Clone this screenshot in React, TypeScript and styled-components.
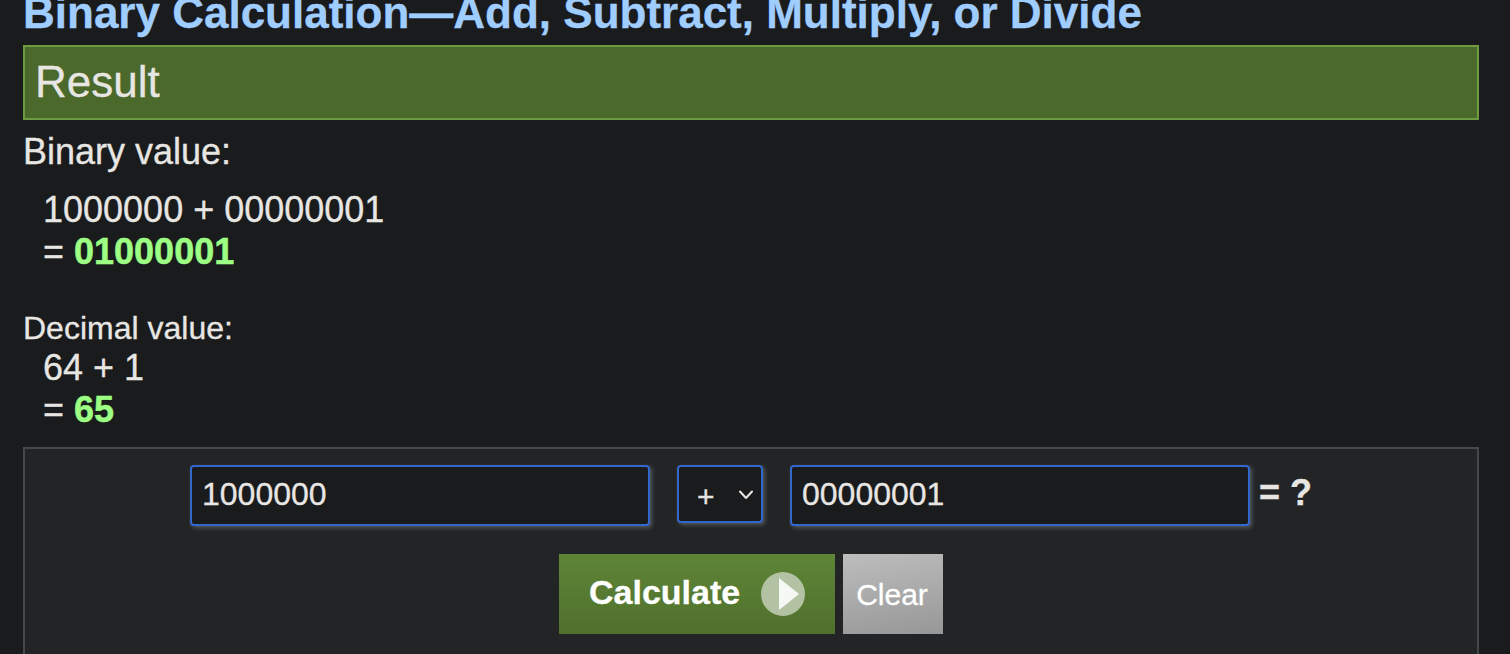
import React, { useState } from "react";
import styled, { createGlobalStyle, css } from "styled-components";

const GlobalStyle = createGlobalStyle`
  *, *::before, *::after { box-sizing: border-box; }
  body {
    margin: 0;
    background: #1a1b1d;
    color: #e8e6e3;
    font-family: "Liberation Sans", Arial, Helvetica, sans-serif;
    -webkit-text-stroke: 0.3px currentColor;
    overflow: hidden;
  }
`;

const Page = styled.main`
  height: 654px;
  padding: 0 31px 0 23px;
  overflow: hidden;
`;

const Title = styled.h1`
  margin: -12px 0 7px;
  font-size: 44px;
  line-height: 50px;
  font-weight: 700;
  color: #a0cdff;
  white-space: nowrap;
`;

const ResultBanner = styled.h2`
  margin: 0 0 11px;
  height: 75px;
  padding: 10px 10px 0;
  border: 2px solid #6f9b40;
  background: #4b692b;
  font-size: 44px;
  line-height: 50px;
  font-weight: 400;
`;

const Label = styled.div<{ $small?: boolean }>`
  font-size: ${(p) => (p.$small ? 32 : 36)}px;
  line-height: ${(p) => (p.$small ? 38 : 42)}px;
`;

const Equation = styled.div<{ $top?: number; $bottom?: number }>`
  margin: ${(p) => p.$top ?? 0}px 0 ${(p) => p.$bottom ?? 0}px;
  padding-left: 20px;
  font-size: 36px;
  line-height: 42px;
`;

const Answer = styled.b`
  color: #9dff84;
  -webkit-text-stroke: 0.5px currentColor;
`;

const Panel = styled.form`
  height: 260px;
  padding: 16px 0 0;
  border: 2px solid #434948;
  background: #232426;
`;

const Row = styled.div`
  display: flex;
  align-items: flex-start;
`;

const Fields = styled(Row)`
  padding-left: 165px;
`;

const Actions = styled(Row)`
  gap: 8px;
  margin-top: 28px;
  padding-left: 534px;
`;

const field = css`
  border: 2px solid #3367cc;
  border-radius: 4px;
  background: #1a1b1d;
  color: #e8e6e3;
  font-family: inherit;
  font-size: 32px;
  box-shadow: 2px 2px 4px #53595c;
`;

const NumberInput = styled.input`
  ${field}
  width: 460px;
  height: 61px;
  padding: 0 10px 2px;
  outline: none;
`;

const Operator = styled.button`
  ${field}
  display: flex;
  align-items: center;
  justify-content: space-between;
  width: 86px;
  height: 58px;
  margin: 0 27px;
  padding: 5px 8px 0 18px;
  font-size: 30px;
`;

const Chevron = styled.svg`
  width: 14px;
  height: 10px;
  margin-bottom: 3px;
`;

const Question = styled.b`
  margin: 7px 0 0 9px;
  font-size: 36px;
  line-height: 42px;
`;

const CalculateButton = styled.button`
  display: flex;
  align-items: center;
  justify-content: space-between;
  width: 276px;
  height: 80px;
  padding: 0 30px;
  border: 0;
  background: linear-gradient(#5e8537, #50702d);
  color: #fff;
  font: 700 34px/40px "Liberation Sans", Arial, sans-serif;

  span {
    margin-bottom: 4px;
  }
`;

const ClearButton = styled.button`
  width: 100px;
  height: 80px;
  padding: 2px 2px 0 0;
  border: 0;
  background: linear-gradient(170deg, #bdbdbd, #979797);
  color: #fff;
  font: 400 30px/36px "Liberation Sans", Arial, sans-serif;
`;

export default function App() {
  const [first, setFirst] = useState("1000000");
  const [second, setSecond] = useState("00000001");

  return (
    <>
      <GlobalStyle />
      <Page>
        <Title>Binary Calculation—Add, Subtract, Multiply, or Divide</Title>
        <ResultBanner>Result</ResultBanner>

        <Label>Binary value:</Label>
        <Equation $top={16} $bottom={36}>
          1000000 + 00000001
          <br />= <Answer>01000001</Answer>
        </Equation>

        <Label $small>Decimal value:</Label>
        <Equation $bottom={16}>
          64 + 1
          <br />= <Answer>65</Answer>
        </Equation>

        <Panel onSubmit={(e) => e.preventDefault()}>
          <Fields>
            <NumberInput value={first} onChange={(e) => setFirst(e.target.value)} />
            <Operator type="button">
              +
              <Chevron viewBox="0 0 14 10" fill="none" stroke="#e8e6e3" strokeWidth="2">
                <path d="M1 1.5 7 8 13 1.5" strokeLinecap="round" strokeLinejoin="round" />
              </Chevron>
            </Operator>
            <NumberInput value={second} onChange={(e) => setSecond(e.target.value)} />
            <Question>= ?</Question>
          </Fields>
          <Actions>
            <CalculateButton type="submit">
              <span>Calculate</span>
              <svg width="44" height="44" viewBox="0 0 44 44">
                <circle cx="22" cy="22" r="22" fill="#b3c2a3" />
                <path d="M18 6v32l20-16z" fill="#f6f8f5" />
              </svg>
            </CalculateButton>
            <ClearButton type="button">Clear</ClearButton>
          </Actions>
        </Panel>
      </Page>
    </>
  );
}
